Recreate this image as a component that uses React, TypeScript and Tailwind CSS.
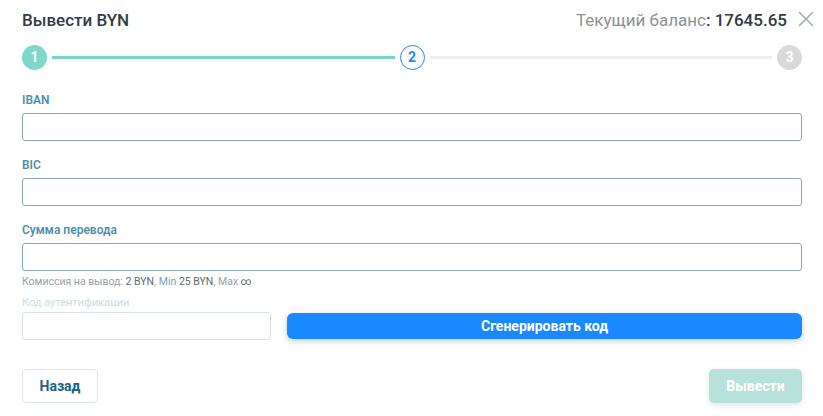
import { X } from 'lucide-react'

function Field({ label, className }: { label: string; className?: string }) {
  return (
    <div className={className}>
      <label className="block text-[12px] font-semibold text-[#4f8fa6] leading-[14px] mb-[6px]">{label}</label>
      <input className="block w-full h-[28px] border border-[#86a9b1] rounded-[3px] outline-none px-2 text-[13px]" />
    </div>
  )
}

export default function App() {
  return (
    <div className="w-[823px] h-[416px] bg-white pl-[22px] pr-[21px] pt-[10px] text-[#2b3a44]" style={{ fontFamily: 'Roboto, "Noto Sans", sans-serif' }}>
      {/* Header */}
      <div className="flex items-center justify-between h-[20px]">
        <h2 className="text-[17px] font-medium leading-[20px] text-[#2f3b45]">Вывести BYN</h2>
        <div className="flex items-center">
          <span className="text-[17px] leading-[20px] text-[#8c9196]">Текущий баланс</span>
          <span className="text-[17px] leading-[20px] font-medium text-[#2f3b45]">: 17645.65</span>
          <X className="ml-[6px] -mr-[17px] -mt-[3px] w-[26px] h-[26px] text-[#a9b0b5]" strokeWidth={1.6} />
        </div>
      </div>

      {/* Stepper */}
      <div className="flex items-center mt-[14px] h-[26px]">
        <div className="w-[25px] h-[25px] rounded-full bg-[#7dd8ca] text-white text-[14px] font-bold flex items-center justify-center shrink-0">1</div>
        <div className="flex-1 h-[3px] bg-[#76d6c6] mx-[5px]" />
        <div className="w-[25px] h-[25px] rounded-full border-[1.5px] border-[#2189f2] text-[#2189f2] text-[14px] font-bold flex items-center justify-center shrink-0">2</div>
        <div className="flex-1 h-[3px] bg-[#eeeeee] mx-[5px]" />
        <div className="w-[25px] h-[25px] rounded-full bg-[#d9d9d9] text-white text-[14px] font-bold flex items-center justify-center shrink-0">3</div>
      </div>

      {/* Fields */}
      <Field label="IBAN" className="mt-[23px]" />
      <Field label="BIC" className="mt-[17px]" />
      <Field label="Сумма перевода" className="mt-[17px]" />

      <div className="mt-[5px] text-[10.5px] leading-[12px] text-[#97a2a6]">
        Комиссия на вывод: <span className="text-[#5d6a70]">2 BYN</span>, <span className="text-[#7aa3b3]">Min</span>{' '}
        <span className="text-[#5d6a70]">25 BYN</span>, Max <span className="text-[#5d6a70]">∞</span>
      </div>

      <div className="mt-[8px] text-[11px] leading-[13px] text-[#c9dde2]">Код аутентификации</div>
      <div className="flex items-center gap-[16px] mt-[3px]">
        <input className="w-[249px] h-[28px] border border-[#d6e4e7] rounded-[3px] outline-none px-2" />
        <button className="flex-1 h-[26px] rounded-[6px] bg-[#1a88ff] text-white text-[14px] font-bold shadow-[0_2px_6px_rgba(40,90,100,0.3)]">
          Сгенерировать код
        </button>
      </div>

      {/* Footer */}
      <div className="flex items-center justify-between mt-[29px]">
        <button className="w-[76px] h-[34px] rounded-[5px] border border-[#dde6e9] bg-white text-[14px] font-bold text-[#1d6185]">Назад</button>
        <button className="w-[93px] h-[34px] rounded-[5px] bg-[#b8e1db] text-white text-[14px] font-bold shadow-[0_2px_6px_rgba(40,90,100,0.15)]">Вывести</button>
      </div>
    </div>
  )
}
